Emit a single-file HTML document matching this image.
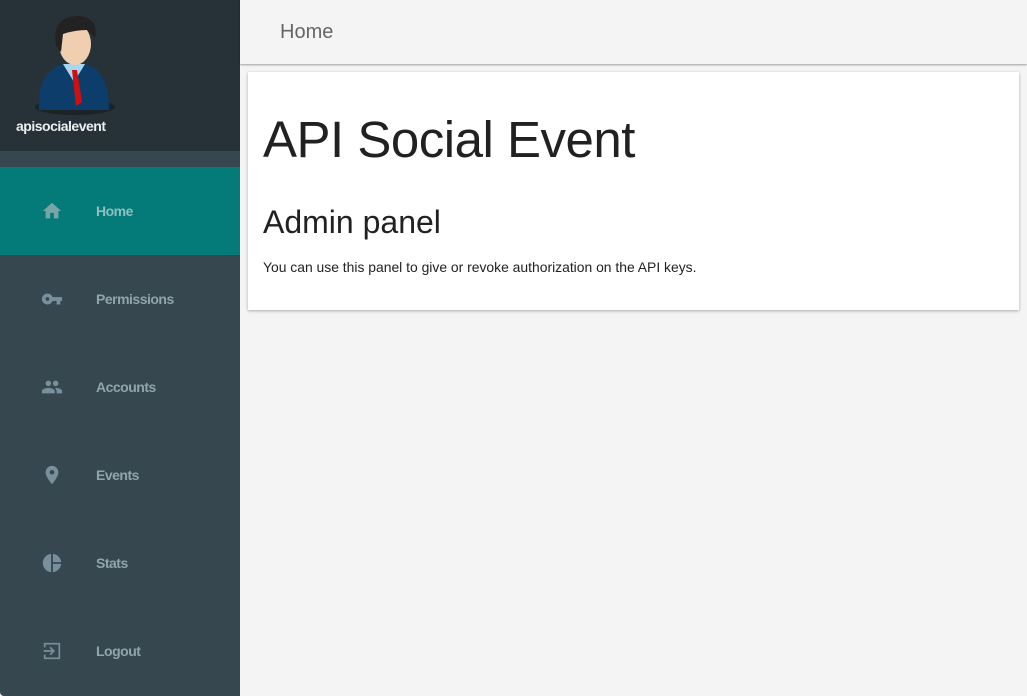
<!DOCTYPE html>
<html><head><meta charset="utf-8"><style>
*{margin:0;padding:0;box-sizing:border-box}
body{width:1027px;height:696px;overflow:hidden;background:#f4f4f4;font-family:"Liberation Sans",sans-serif;position:relative}
.side{position:absolute;left:0;top:0;width:240px;height:696px;background:#37474f;border-bottom-left-radius:4px}
.top{height:151px;background:#263238;position:relative}
.uname{position:absolute;left:16px;top:118px;color:#eceff1;font-size:14px;font-weight:bold;letter-spacing:-0.5px}
.item{position:absolute;left:0;width:240px;height:88px}
.item.active{background:#047b78}
.item svg{position:absolute;left:41px;top:33px;width:22px;height:22px}
.item span{position:absolute;left:96px;top:36px;font-size:14px;font-weight:bold;color:#90a4ae;letter-spacing:-0.5px}
.item.active span{color:#8fbfbf}
.hdr{position:absolute;left:240px;top:0;right:0;height:64px;background:#f4f4f4;box-shadow:0 1px 2px rgba(0,0,0,.35)}
.hdr span{position:absolute;left:40px;top:21px;font-size:20px;color:#666}
.card{position:absolute;left:248px;top:72px;width:771px;height:238px;background:#fff;box-shadow:0 1px 3px rgba(0,0,0,.3)}
h1{position:absolute;left:15px;top:38px;font-size:51px;font-weight:normal;color:#212121;letter-spacing:-0.5px}
h2{position:absolute;left:15px;top:132px;font-size:32px;font-weight:normal;color:#212121}
p{position:absolute;left:15px;top:187px;font-size:13.9px;color:#222}
</style></head><body>
<div class="side">
 <div class="top">
  <svg width="100" height="115" style="position:absolute;left:25px;top:10px" viewBox="0 0 100 115">
   <ellipse cx="50" cy="97" rx="40" ry="8" fill="#111" opacity=".5"/>
   <path d="M14 100 Q12 62 38 54 L60 54 Q84 60 84 100 Z" fill="#0d3d6b"/>
   <path d="M38 54 L49 72 L60 54 Z" fill="#a8d8f0"/>
   <path d="M47 60 L52 60 L57 92 L51 96 Z" fill="#d01010"/>
   <ellipse cx="50" cy="34" rx="16" ry="21" fill="#efcfb0"/>
   <path d="M31 36 Q26 6 54 6 Q74 8 70 28 L62 20 Q50 20 38 24 L36 42 Z" fill="#222"/>
  </svg>
  <div class="uname">apisocialevent</div>
 </div>
 <div class="item active" style="top:167px"><svg viewBox="0 0 24 24"><path fill="#78a6a6" d="M10 20v-6h4v6h5v-8h3L12 3 2 12h3v8z"/></svg><span>Home</span></div>
 <div class="item" style="top:255px"><svg viewBox="0 0 24 24"><path fill="#78909c" d="M12.65 10A6 6 0 1 0 12.65 14H17v4h4v-4h2v-4zM7 14a2 2 0 1 1 0-4 2 2 0 0 1 0 4z"/></svg><span>Permissions</span></div>
 <div class="item" style="top:343px"><svg viewBox="0 0 24 24"><path fill="#78909c" d="M16 11c1.66 0 3-1.34 3-3s-1.34-3-3-3-3 1.34-3 3 1.34 3 3 3zm-8 0c1.66 0 3-1.34 3-3S9.66 5 8 5 5 6.34 5 8s1.34 3 3 3zm0 2c-2.33 0-7 1.170-7 3.5V19h14v-2.5C15 14.170 10.33 13 8 13zm8 0c-.29 0-.62.02-.97.05C16.19 13.89 17 15.02 17 16.5V19h6v-2.5c0-2.33-4.67-3.5-7-3.5z"/></svg><span>Accounts</span></div>
 <div class="item" style="top:431px"><svg viewBox="0 0 24 24"><path fill="#78909c" d="M12 2C8.13 2 5 5.13 5 9c0 5.25 7 13 7 13s7-7.75 7-13c0-3.87-3.13-7-7-7zm0 9.5a2.5 2.5 0 1 1 0-5 2.5 2.5 0 0 1 0 5z"/></svg><span>Events</span></div>
 <div class="item" style="top:519px"><svg viewBox="0 0 24 24"><path fill="#78909c" d="M11 2v20c-5.07-.5-9-4.790-9-10s3.930-9.5 9-10zm2.03 0v8.99H22c-.47-4.74-4.24-8.52-8.97-8.99zm0 11.01V22c4.74-.47 8.5-4.25 8.97-8.99h-8.97z"/></svg><span>Stats</span></div>
 <div class="item" style="top:607px"><svg viewBox="0 0 24 24"><path fill="none" stroke="#78909c" stroke-width="1.8" d="M4 8V4h16v16H4v-4M3 12h11M10 8l4 4-4 4"/></svg><span>Logout</span></div>
</div>
<div class="hdr"><span>Home</span></div>
<div class="card">
 <h1>API Social Event</h1>
 <h2>Admin panel</h2>
 <p>You can use this panel to give or revoke authorization on the API keys.</p>
</div>
</body></html>
